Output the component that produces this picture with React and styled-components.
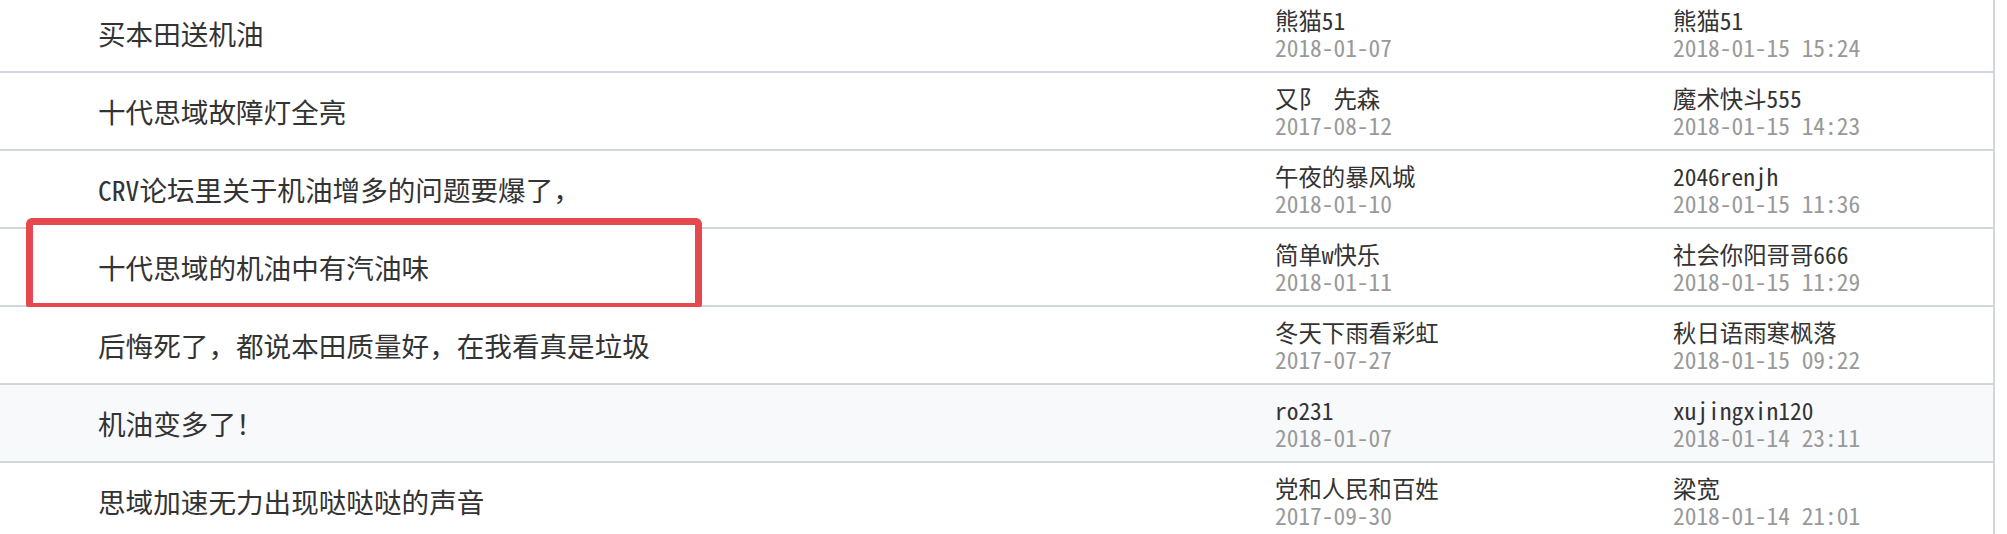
import React from "react";
import styled, { createGlobalStyle } from "styled-components";

const Global = createGlobalStyle`
  html, body { margin: 0; padding: 0; background: #fff; overflow: hidden; }
  body {
    font-family: "Noto Sans Mono CJK SC", "Noto Sans CJK SC", "Liberation Serif", serif;
    color: #333;
  }
`;

const Table = styled.div`
  width: 1995px;
  margin-top: -5px;
  border-right: 2px solid #d0d5de;
  box-sizing: border-box;
`;

const Row = styled.div`
  position: relative;
  display: grid;
  grid-template-columns: 1275px 398px 1fr;
  height: 78px;
  box-sizing: border-box;
  border-bottom: 2px solid #d0d5de;
  background: ${(p) => (p.$hover ? "#f8f9fb" : "#fff")};
`;

const Title = styled.div`
  position: relative;
  z-index: 1;
  display: flex;
  align-items: center;
  padding-left: 98px;
  font-size: 27.6px;
  line-height: 32px;
  color: #333;
  white-space: nowrap;
`;

const Meta = styled.div`
  position: relative;
  z-index: 1;
  display: flex;
  flex-direction: column;
  justify-content: center;
  padding-top: 2px;
  font-size: 23.4px;
  white-space: nowrap;
`;

const Line = styled.div`
  height: 27px;
  line-height: 27px;
  color: ${(p) => (p.$muted ? "#999" : "#333")};
`;

const Mark = styled.span`
  position: absolute;
  z-index: 0;
  left: 26px;
  top: -11px;
  width: 676px;
  height: 92px;
  box-sizing: border-box;
  border: 7px solid #e5484d;
  border-radius: 6px;
  background: #fff;
`;

const rows = [
  { title: "买本田送机油", author: "熊猫51", date: "2018-01-07", last: "熊猫51", lastTime: "2018-01-15 15:24" },
  { title: "十代思域故障灯全亮", author: "又阝 先森", date: "2017-08-12", last: "魔术快斗555", lastTime: "2018-01-15 14:23" },
  { title: "CRV论坛里关于机油增多的问题要爆了，", author: "午夜的暴风城", date: "2018-01-10", last: "2046renjh", lastTime: "2018-01-15 11:36" },
  { title: "十代思域的机油中有汽油味", author: "简单w快乐", date: "2018-01-11", last: "社会你阳哥哥666", lastTime: "2018-01-15 11:29", marked: true },
  { title: "后悔死了，都说本田质量好，在我看真是垃圾", author: "冬天下雨看彩虹", date: "2017-07-27", last: "秋日语雨寒枫落", lastTime: "2018-01-15 09:22" },
  { title: "机油变多了！", author: "ro231", date: "2018-01-07", last: "xujingxin120", lastTime: "2018-01-14 23:11", hover: true },
  { title: "思域加速无力出现哒哒哒的声音", author: "党和人民和百姓", date: "2017-09-30", last: "梁宽", lastTime: "2018-01-14 21:01" },
];

export default function App() {
  return (
    <>
      <Global />
      <Table>
        {rows.map((r, i) => (
          <Row key={i} $hover={r.hover}>
            {r.marked && <Mark />}
            <Title>{r.title}</Title>
            <Meta>
              <Line>{r.author}</Line>
              <Line $muted>{r.date}</Line>
            </Meta>
            <Meta>
              <Line>{r.last}</Line>
              <Line $muted>{r.lastTime}</Line>
            </Meta>
          </Row>
        ))}
      </Table>
    </>
  );
}
